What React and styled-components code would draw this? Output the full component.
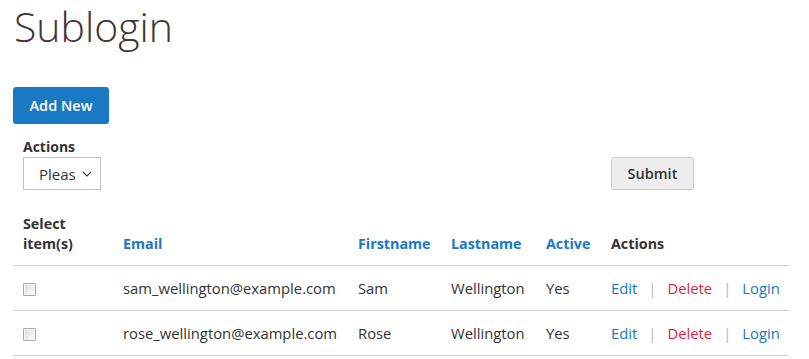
import styled, { createGlobalStyle } from 'styled-components';

const GlobalStyle = createGlobalStyle`
  body {
    margin: 0;
    background: #fff;
    font-family: 'Open Sans', 'Liberation Sans', sans-serif;
    font-size: 14px;
    color: #333;
  }
`;

const Page = styled.div`
  padding: 0 20px 0 13px;
`;

const Title = styled.h1`
  margin: 0;
  padding-left: 1px;
  font-size: 41px;
  font-weight: 300;
  line-height: 52px;
  color: #41362f;
`;

const PrimaryButton = styled.button`
  margin-top: 35px;
  height: 37px;
  width: 96px;
  border: none;
  border-radius: 3px;
  background: #1979c3;
  color: #fff;
  font-family: inherit;
  font-size: 14.5px;
  font-weight: 600;
  padding: 0;
`;

const Toolbar = styled.div`
  display: flex;
  align-items: flex-end;
  padding-left: 10px;
  margin-top: 13px;
`;

const Field = styled.div`
  display: flex;
  flex-direction: column;
`;

const Label = styled.label`
  font-weight: 700;
  line-height: 20px;
`;

const SelectBox = styled.div`
  box-sizing: border-box;
  width: 78px;
  height: 33px;
  border: 1px solid #c2c2c2;
  display: flex;
  align-items: center;
  padding-left: 15px;
  gap: 6px;
  font-size: 15px;
`;

const SecondaryButton = styled.button`
  margin-left: 510px;
  box-sizing: border-box;
  width: 83px;
  height: 33px;
  border: 1px solid #cdcdcd;
  border-radius: 3px;
  background: #eee;
  color: #333;
  font-family: inherit;
  font-size: 14.5px;
  font-weight: 600;
  padding: 0;
`;

const Table = styled.table`
  margin-top: 12px;
  width: 776px;
  border-collapse: collapse;
  table-layout: fixed;
`;

const Th = styled.th`
  text-align: left;
  vertical-align: bottom;
  padding: 12px 10px 11px;
  line-height: 20px;
  font-size: 14.3px;
  font-weight: 700;
  color: ${p => (p.$sortable ? '#1979c3' : '#333')};
  border-bottom: 1px solid #d1d1d1;
`;

const Td = styled.td`
  padding: 12px 10px 12px;
  line-height: 20px;
  font-size: 14.8px;
  border-bottom: 1px solid #d1d1d1;
  white-space: nowrap;
`;

const Check = styled.input`
  appearance: none;
  margin: 3px 0 0;
  width: 13px;
  height: 13px;
  display: block;
  border: 1px solid #a9a9a9;
  border-radius: 1px;
  background: linear-gradient(135deg, #dcdcdc, #fbfbfb);
  box-shadow: inset 0 0 0 1px #f4f4f4;
`;

const Link = styled.a`
  color: ${p => (p.$danger ? '#d9253f' : '#1979c3')};
  text-decoration: none;
`;

const Sep = styled.span`
  color: #b5b5b5;
  margin: 0 11px;
`;

const Chevron = () => (
  <svg width="10" height="6" viewBox="0 0 10 6">
    <path d="M1 1l4 4 4-4" fill="none" stroke="#333" strokeWidth="1.1" />
  </svg>
);

const users = [
  { email: 'sam_wellington@example.com', first: 'Sam', last: 'Wellington', active: 'Yes' },
  { email: 'rose_wellington@example.com', first: 'Rose', last: 'Wellington', active: 'Yes' },
];

const App = () => (
  <Page>
    <GlobalStyle />
    <Title>Sublogin</Title>
    <PrimaryButton>Add New</PrimaryButton>
    <Toolbar>
      <Field>
        <Label>Actions</Label>
        <SelectBox>
          <span>Pleas</span>
          <Chevron />
        </SelectBox>
      </Field>
      <SecondaryButton>Submit</SecondaryButton>
    </Toolbar>
    <Table>
      <colgroup>
        <col style={{ width: 100 }} />
        <col style={{ width: 235 }} />
        <col style={{ width: 93 }} />
        <col style={{ width: 95 }} />
        <col style={{ width: 65 }} />
        <col />
      </colgroup>
      <thead>
        <tr>
          <Th>Select item(s)</Th>
          <Th $sortable>Email</Th>
          <Th $sortable>Firstname</Th>
          <Th $sortable>Lastname</Th>
          <Th $sortable>Active</Th>
          <Th>Actions</Th>
        </tr>
      </thead>
      <tbody>
        {users.map(u => (
          <tr key={u.email}>
            <Td><Check type="checkbox" /></Td>
            <Td>{u.email}</Td>
            <Td>{u.first}</Td>
            <Td>{u.last}</Td>
            <Td>{u.active}</Td>
            <Td>
              <Link href="#">Edit</Link>
              <Sep>|</Sep>
              <Link href="#" $danger>Delete</Link>
              <Sep>|</Sep>
              <Link href="#">Login</Link>
            </Td>
          </tr>
        ))}
      </tbody>
    </Table>
  </Page>
);

export default App;
